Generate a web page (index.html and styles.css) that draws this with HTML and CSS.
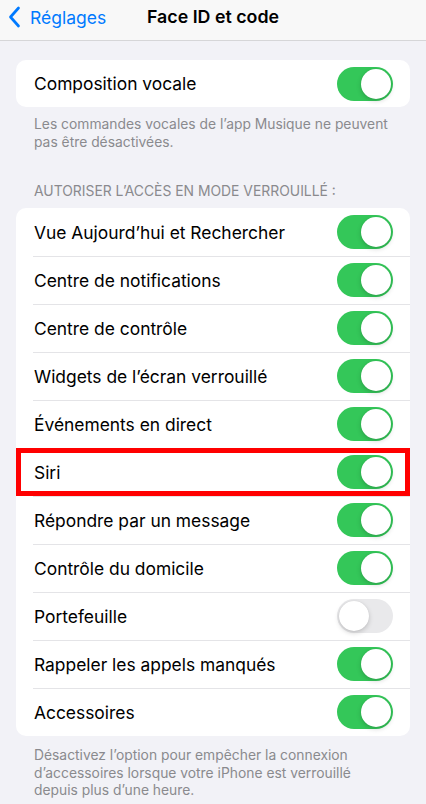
FILE: index.html
```html
<!DOCTYPE html>
<html lang="fr">
<head>
<meta charset="utf-8">
<link rel="stylesheet" href="styles.css">
</head>
<body>
<header class="nav">
  <a class="back">
    <svg class="chev" width="13" height="22" viewBox="0 0 13 22"><path d="M10.5 2 L2.5 11 L10.5 20" fill="none" stroke="#007aff" stroke-width="2.7" stroke-linecap="round" stroke-linejoin="round"/></svg>
    <span>Réglages</span>
  </a>
  <h1 class="title">Face ID et code</h1>
</header>
<main class="content">
  <section class="card card-first">
    <div class="row"><span class="label">Composition vocale</span><span class="toggle on"></span></div>
  </section>
  <p class="note note-first">Les commandes vocales de l’app Musique ne peuvent pas être désactivées.</p>
  <h2 class="section-head">AUTORISER L’ACCÈS EN MODE VERROUILLÉ :</h2>
  <section class="card">
    <div class="row"><span class="label">Vue Aujourd’hui et Rechercher</span><span class="toggle on"></span></div>
    <div class="row"><span class="label">Centre de notifications</span><span class="toggle on"></span></div>
    <div class="row"><span class="label">Centre de contrôle</span><span class="toggle on"></span></div>
    <div class="row"><span class="label">Widgets de l’écran verrouillé</span><span class="toggle on"></span></div>
    <div class="row"><span class="label">Événements en direct</span><span class="toggle on"></span></div>
    <div class="row highlight"><span class="label">Siri</span><span class="toggle on"></span></div>
    <div class="row"><span class="label">Répondre par un message</span><span class="toggle on"></span></div>
    <div class="row"><span class="label">Contrôle du domicile</span><span class="toggle on"></span></div>
    <div class="row"><span class="label">Portefeuille</span><span class="toggle"></span></div>
    <div class="row"><span class="label">Rappeler les appels manqués</span><span class="toggle on"></span></div>
    <div class="row"><span class="label">Accessoires</span><span class="toggle on"></span></div>
  </section>
  <p class="note note-last">Désactivez l’option pour empêcher la connexion d’accessoires lorsque votre iPhone est verrouillé depuis plus d’une heure.</p>
</main>
</body>
</html>
```
FILE: styles.css
```css
* { box-sizing: border-box; }
html, body { margin: 0; padding: 0; }
body {
  background: #f2f2f7;
  font-family: Inter, "Noto Sans", sans-serif;
  color: #000;
  width: 426px;
  overflow: hidden;
}
.nav {
  height: 41px;
  background: #f8f8f8;
  border-bottom: 1px solid #d6d6d8;
  display: flex;
  align-items: center;
  justify-content: center;
  position: relative;
}
.back {
  position: absolute;
  left: 8px;
  top: 0;
  height: 34px;
  display: flex;
  align-items: center;
  gap: 9px;
  color: #007aff;
  font-size: 17.5px;
}
.title {
  margin: 0 0 7px 0;
  font-size: 17.8px;
  font-weight: 600;
}
.content {
  padding: 19px 16px 0 16px;
}
.card {
  background: #fff;
  border-radius: 10px;
  overflow: hidden;
}
.row {
  height: 48px;
  display: flex;
  align-items: center;
  justify-content: space-between;
  padding: 0 17px 0 18px;
  position: relative;
}
.card-first .row { height: 47px; }
.row + .row::before {
  content: "";
  position: absolute;
  left: 17px;
  right: 0;
  top: 0;
  border-top: 1px solid #e4e4e7;
}
.label {
  font-size: 17.4px;
  letter-spacing: 0;
}
.highlight::after {
  content: "";
  position: absolute;
  inset: 0;
  border: 5.5px solid #ff0000;
  z-index: 2;
}
.toggle {
  width: 56px;
  height: 34px;
  border-radius: 17px;
  background: #e9e9eb;
  position: relative;
  flex: none;
}
.toggle::after {
  content: "";
  position: absolute;
  top: 2px;
  left: 2px;
  width: 30px;
  height: 30px;
  border-radius: 50%;
  background: #fff;
  box-shadow: 0 2px 5px rgba(0,0,0,0.18), 0 0 1px rgba(0,0,0,0.1);
}
.toggle.on { background: #34c759; }
.toggle.on::after { left: 24px; }
.note {
  margin: 0;
  padding: 9px 18px 0 18px;
  font-size: 13.85px;
  line-height: 17.5px;
  color: #8a8a8e;
}
.note-first { height: 43px; }
.note-last { padding-top: 11px; }
.section-head {
  margin: 0;
  padding: 33px 18px 8px 18px;
  font-size: 13.9px;
  line-height: 17px;
  font-weight: 400;
  color: #8a8a8e;
}
```
